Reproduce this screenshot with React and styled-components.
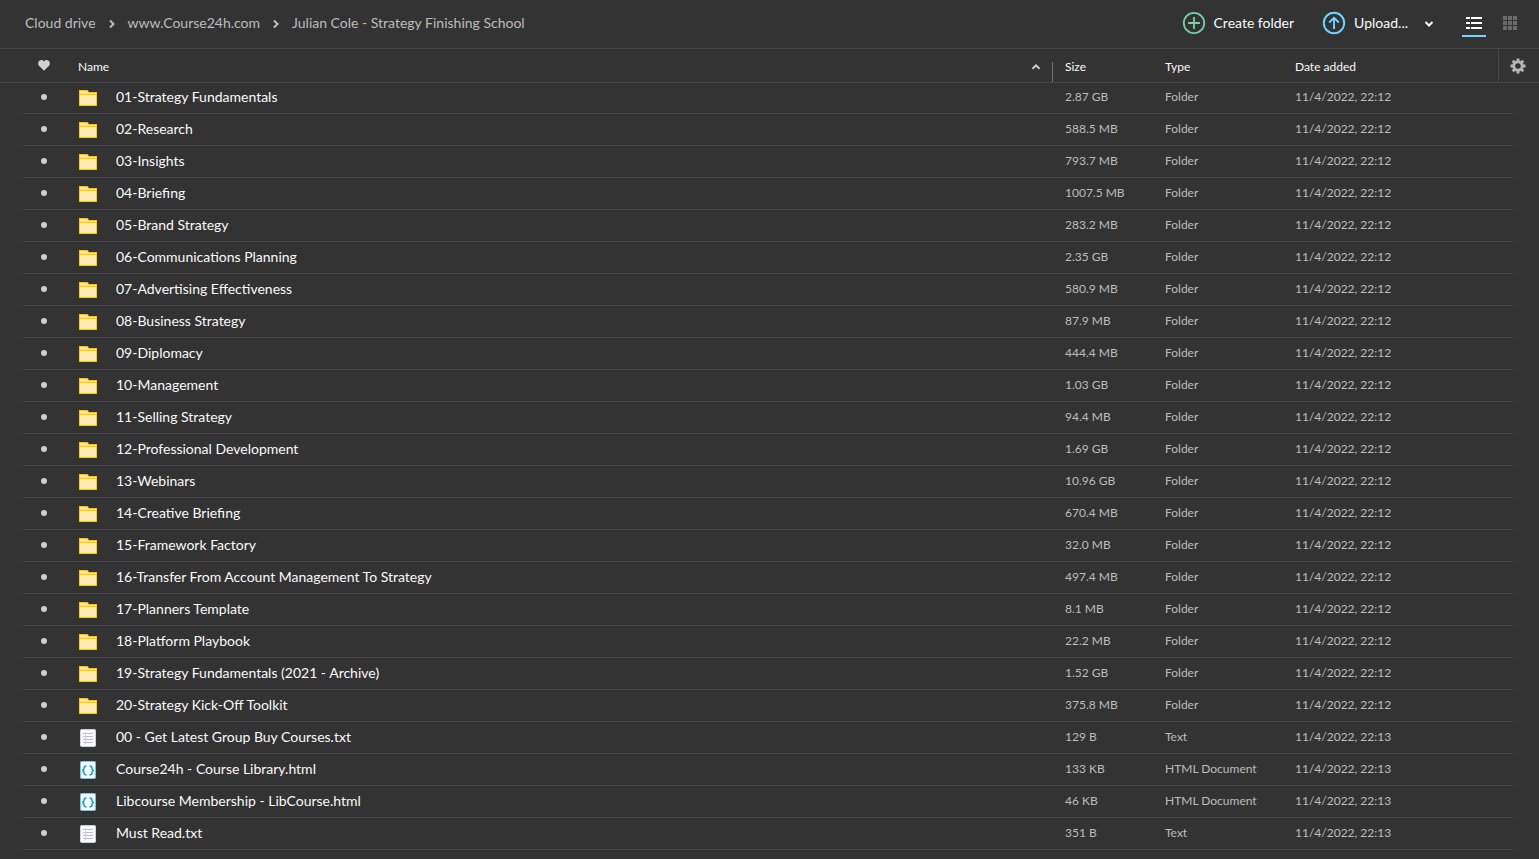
import React from 'react';
import styled, { createGlobalStyle, css } from 'styled-components';

const GlobalStyle = createGlobalStyle`
  * { box-sizing: border-box; }
  body {
    margin: 0;
    background: #333333;
    color: #fafafa;
    font-family: Lato, "Open Sans", sans-serif;
    font-size: 14px;
    line-height: 20px;
  }
  button { font: inherit; color: inherit; background: none; border: 0; padding: 0; cursor: pointer; }
`;

const Page = styled.main`
  min-height: 100vh;
  display: flex;
  flex-direction: column;
`;

const Toolbar = styled.header`
  display: flex;
  align-items: center;
  height: 49px;
  padding: 0 17px 2px 25px;
  border-bottom: 1px solid #474747;
`;

const Breadcrumbs = styled.nav`
  flex: 1;
  display: flex;
  align-items: center;
  color: #bdbdbd;
  svg { margin: 1px 11px 0; }
`;

const Crumb = styled.a`
  color: inherit;
  text-decoration: none;
  white-space: nowrap;
`;

const Actions = styled.div`
  display: flex;
  align-items: center;
`;

const ActionButton = styled.button`
  display: flex;
  align-items: center;
  gap: 8px;
  margin-right: 28px;
  white-space: nowrap;
`;

const Caret = styled.span`
  display: flex;
  margin: 2px 0 0 8px;
`;

const ViewButton = styled.button`
  display: flex;
  align-items: center;
  justify-content: center;
  width: 24px;
  height: 28px;
  margin-right: ${(p) => (p.$active ? '12px' : '0')};
  padding-top: 2px;
  border-bottom: 2px solid ${(p) => (p.$active ? '#70d5ff' : 'transparent')};
  color: ${(p) => (p.$active ? '#ffffff' : '#6b6b6b')};
`;

const Table = styled.table`
  width: 100%;
  table-layout: fixed;
  border-spacing: 0;
`;

const Col = styled.col`
  width: ${(p) => p.$w || 'auto'};
`;

const HeadCell = styled.th`
  height: 33px;
  padding: ${(p) => p.$pad || '2px 0 0 12px'};
  box-shadow: 0 1px 0 #474747;
  font-size: 12px;
  line-height: 16px;
  font-weight: 400;
  text-align: left;
  ${(p) => p.$settings && css`border-left: 1px solid #474747;`}
  > svg, button { display: block; }
`;

const SortHeader = styled.div`
  display: flex;
  align-items: flex-end;
  justify-content: space-between;
  height: 33px;
`;

const SortLabel = styled.span`
  padding-bottom: 7px;
`;

const SortBar = styled.div`
  display: flex;
  height: 20px;
  padding-right: 11px;
  border-right: 1px solid #707070;
  color: #d0d0d0;
`;

const Row = styled.tr`
  height: 32px;
  background: linear-gradient(#474747, #474747) 23px 100% / calc(100% - 49px) 1px no-repeat;
`;

const Cell = styled.td`
  padding: 0 0 2px ${(p) => p.$left || '12px'};
  color: #bdbdbd;
  font-size: 12px;
  line-height: 16px;
  white-space: nowrap;
`;

const FileName = styled.div`
  display: flex;
  align-items: center;
  gap: 18px;
  color: #fafafa;
  font-size: 14px;
  line-height: 20px;
  svg { flex: none; margin-top: 2px; }
`;

const Dot = styled.span`
  display: block;
  width: 6px;
  height: 6px;
  border-radius: 50%;
  background: #d0d0d0;
`;

const CHEVRONS = {
  right: 'M3 1.5 6.5 5 3 8.5',
  down: 'M1.5 3 5 6.5 8.5 3',
  up: 'M1.5 6.8 5 3.3 8.5 6.8',
};

const Chevron = ({ dir }) => (
  <svg width="10" height="10" viewBox="0 0 10 10" fill="none" stroke="currentColor" strokeWidth="2" aria-hidden="true">
    <path d={CHEVRONS[dir]} />
  </svg>
);

const PlusCircle = () => (
  <svg width="24" height="24" viewBox="0 0 24 24" fill="none" stroke="#79ceab" strokeWidth="1.8" aria-hidden="true">
    <circle cx="12" cy="12" r="10.2" />
    <path d="M12 6v12M6 12h12" />
  </svg>
);

const UploadCircle = () => (
  <svg width="24" height="24" viewBox="0 0 24 24" fill="none" stroke="#70d5ff" strokeWidth="1.9" aria-hidden="true">
    <circle cx="12" cy="12" r="10.2" />
    <path d="M12 18V7M7.2 11.5 12 6.8l4.8 4.7" />
  </svg>
);

const ListIcon = () => (
  <svg width="16" height="12" viewBox="0 0 16 12" fill="currentColor" aria-hidden="true">
    {[0, 5, 10].map((y) => (
      <g key={y}>
        <rect x="0" y={y} width="4" height="2" />
        <rect x="5" y={y} width="11" height="2" />
      </g>
    ))}
  </svg>
);

const GridIcon = () => (
  <svg width="14" height="14" viewBox="0 0 14 14" fill="currentColor" aria-hidden="true">
    {[0, 5, 10].map((y) => [0, 5, 10].map((x) => <rect key={`${x}-${y}`} x={x} y={y} width="4" height="4" />))}
  </svg>
);

const HeartIcon = () => (
  <svg width="12" height="11" viewBox="0 0 12 11" fill="#d0d0d0" role="img" aria-label="Favourite">
    <path d="M6 10.8 1.2 6.1C-.2 4.6-.2 2.3 1.1 1 2.5-.3 4.7-.2 6 1.4 7.3-.2 9.5-.3 10.9 1 12.2 2.3 12.2 4.6 10.8 6.1Z" />
  </svg>
);

const GearIcon = () => (
  <svg width="16" height="16" viewBox="0 0 16 16" fill="none" stroke="#b5b5b5" aria-hidden="true" display="block">
    <circle cx="8" cy="8" r="4.3" strokeWidth="3" />
    <path d="M8 .5v2.5M8 13v2.5M.5 8H3M13 8h2.5M2.7 2.7l1.8 1.8M11.5 11.5l1.8 1.8M2.7 13.3l1.8-1.8M11.5 4.5l1.8-1.8" strokeWidth="2.8" />
  </svg>
);

const FolderIcon = () => (
  <svg width="20" height="18" viewBox="0 0 20 18" aria-hidden="true">
    <path d="M1 1h8.5l1.5 2h8v14H1Z" fill="#ffc900" />
    <path d="M2 2h7l1.500 2H2Z" fill="#ffe596" />
    <path d="M2 4h16v1H2Z" fill="#ffe07d" />
    <path d="M2 6h16v10H2Z" fill="#ffeab3" />
  </svg>
);

const TextIcon = () => (
  <svg width="20" height="18" viewBox="0 0 20 18" aria-hidden="true">
    <rect x="2.5" y=".5" width="15" height="17" rx="1" fill="#fafafa" stroke="#c8d2e4" />
    <path d="M5 4.5h10M5 7.5h10M5 10.5h10M5 13.5h10" stroke="#a9bfdc" />
    <path d="M7.5 3v12" stroke="#ffc0c0" />
  </svg>
);

const CodeIcon = () => (
  <svg width="20" height="18" viewBox="0 0 20 18" fill="none" aria-hidden="true">
    <rect x="2.5" y=".5" width="15" height="17" rx="1" fill="#fafafa" stroke="#6fc6ea" />
    <path d="M8.500 5C6.300 5 6 5.800 6 7.300 6 8.600 5.500 9.500 4 9.500 5.500 9.500 6 10.400 6 11.700 6 13.200 6.300 14 8.500 14M11.500 5c2.200 0 2.500.8 2.500 2.300 0 1.300.5 2.200 2 2.200-1.500 0-2 .9-2 2.200 0 1.500-.3 2.300-2.500 2.300" stroke="#0aa5dc" strokeWidth="1.5" />
  </svg>
);

const ICONS = { Folder: FolderIcon, Text: TextIcon, 'HTML Document': CodeIcon };

const folder = (name, size) => ({ name, size, type: 'Folder', date: '11/4/2022, 22:12' });
const file = (name, size, type) => ({ name, size, type, date: '11/4/2022, 22:13' });

const ITEMS = [
  folder('01-Strategy Fundamentals', '2.87 GB'),
  folder('02-Research', '588.5 MB'),
  folder('03-Insights', '793.7 MB'),
  folder('04-Briefing', '1007.5 MB'),
  folder('05-Brand Strategy', '283.2 MB'),
  folder('06-Communications Planning', '2.35 GB'),
  folder('07-Advertising Effectiveness', '580.9 MB'),
  folder('08-Business Strategy', '87.9 MB'),
  folder('09-Diplomacy', '444.4 MB'),
  folder('10-Management', '1.03 GB'),
  folder('11-Selling Strategy', '94.4 MB'),
  folder('12-Professional Development', '1.69 GB'),
  folder('13-Webinars', '10.96 GB'),
  folder('14-Creative Briefing', '670.4 MB'),
  folder('15-Framework Factory', '32.0 MB'),
  folder('16-Transfer From Account Management To Strategy', '497.4 MB'),
  folder('17-Planners Template', '8.1 MB'),
  folder('18-Platform Playbook', '22.2 MB'),
  folder('19-Strategy Fundamentals (2021 - Archive)', '1.52 GB'),
  folder('20-Strategy Kick-Off Toolkit', '375.8 MB'),
  file('00 - Get Latest Group Buy Courses.txt', '129 B', 'Text'),
  file('Course24h - Course Library.html', '133 KB', 'HTML Document'),
  file('Libcourse Membership - LibCourse.html', '46 KB', 'HTML Document'),
  file('Must Read.txt', '351 B', 'Text'),
];

function FileRow({ item }) {
  const Icon = ICONS[item.type];
  return (
    <Row>
      <Cell $left="41px"><Dot /></Cell>
      <Cell $left="10px"><FileName><Icon />{item.name}</FileName></Cell>
      <Cell>{item.size}</Cell>
      <Cell>{item.type}</Cell>
      <Cell>{item.date}</Cell>
      <Cell />
    </Row>
  );
}

export default function App() {
  return (
    <Page>
      <GlobalStyle />
      <Toolbar>
        <Breadcrumbs aria-label="Path">
          <Crumb href="#drive">Cloud drive</Crumb>
          <Chevron dir="right" />
          <Crumb href="#course24h">www.Course24h.com</Crumb>
          <Chevron dir="right" />
          <Crumb href="#strategy">Julian Cole - Strategy Finishing School</Crumb>
        </Breadcrumbs>
        <Actions>
          <ActionButton><PlusCircle />Create folder</ActionButton>
          <ActionButton><UploadCircle />Upload...<Caret><Chevron dir="down" /></Caret></ActionButton>
          <ViewButton $active aria-label="List view"><ListIcon /></ViewButton>
          <ViewButton aria-label="Grid view"><GridIcon /></ViewButton>
        </Actions>
      </Toolbar>
      <Table>
        <colgroup>
          <Col $w="68px" />
          <Col />
          <Col $w="100px" />
          <Col $w="130px" />
          <Col $w="215px" />
          <Col $w="41px" />
        </colgroup>
        <thead>
          <tr>
            <HeadCell $pad="0 0 0 38px"><HeartIcon /></HeadCell>
            <HeadCell $pad="0 0 0 10px">
              <SortHeader>
                <SortLabel>Name</SortLabel>
                <SortBar><Chevron dir="up" /></SortBar>
              </SortHeader>
            </HeadCell>
            <HeadCell>Size</HeadCell>
            <HeadCell>Type</HeadCell>
            <HeadCell>Date added</HeadCell>
            <HeadCell $settings $pad="0 0 0 11px">
              <button aria-label="Column settings"><GearIcon /></button>
            </HeadCell>
          </tr>
        </thead>
        <tbody>
          {ITEMS.map((item) => <FileRow key={item.name} item={item} />)}
        </tbody>
      </Table>
    </Page>
  );
}
